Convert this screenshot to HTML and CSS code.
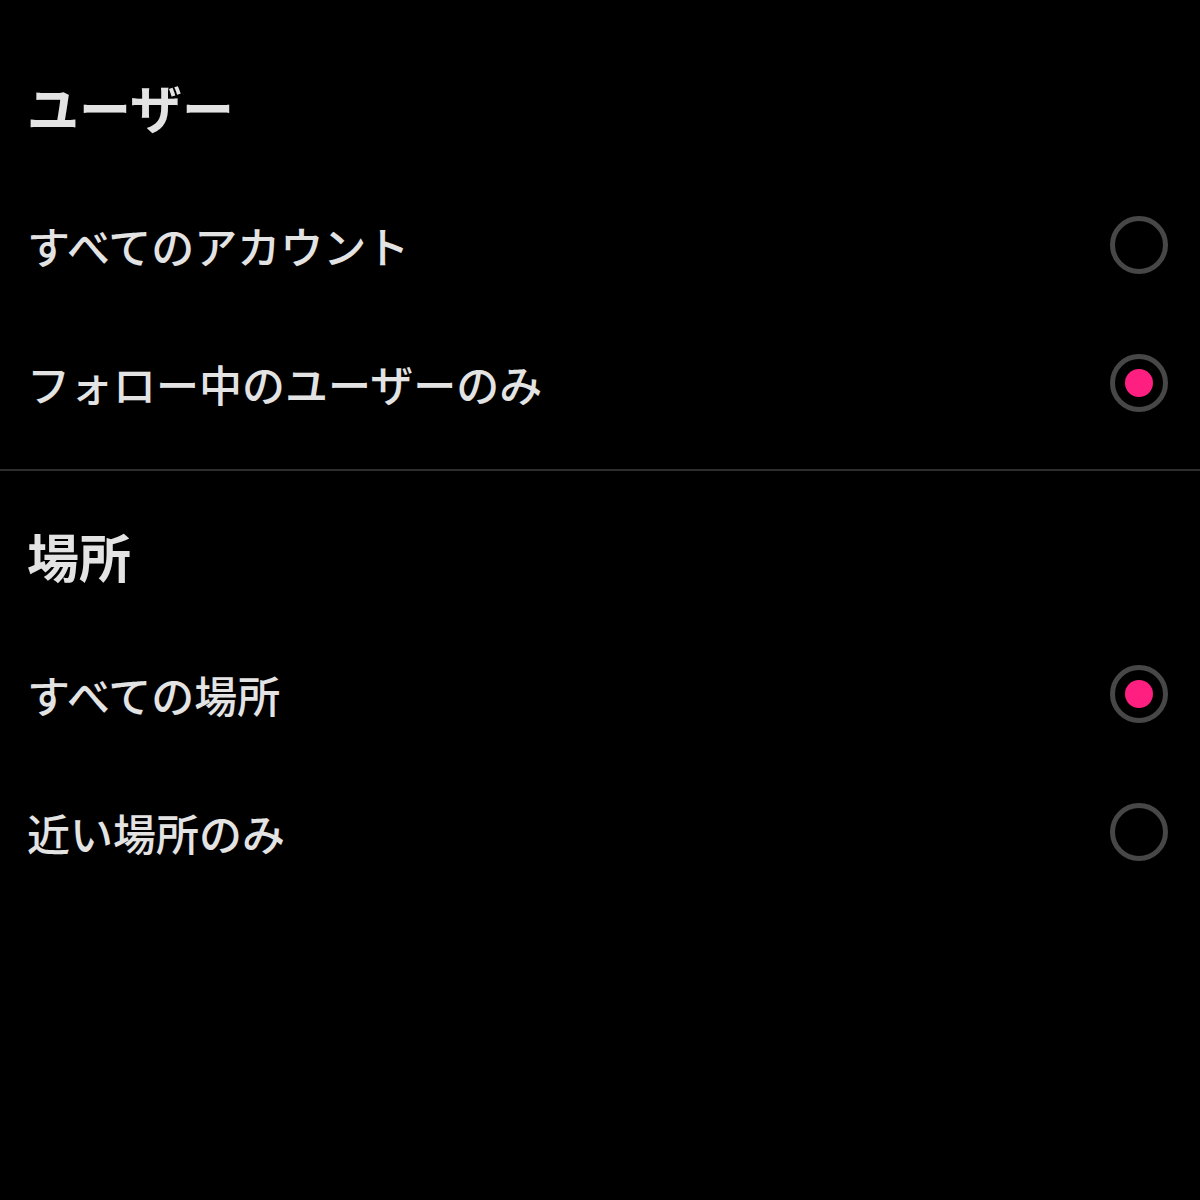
FILE: index.html
```html
<!DOCTYPE html>
<html lang="ja">
<head>
  <meta charset="UTF-8" />
  <meta name="viewport" content="width=device-width, initial-scale=1.0"/>
  <title>フィルター</title>
  <link rel="stylesheet" href="styles.css">
</head>
<body>
  <div class="page">
    <section class="group">
      <h2>ユーザー</h2>
      <label class="option">
        <span class="option-text">すべてのアカウント</span>
        <input type="radio" name="users" value="all">
        <span class="radio"></span>
      </label>
      <label class="option">
        <span class="option-text">フォロー中のユーザーのみ</span>
        <input type="radio" name="users" value="following" checked>
        <span class="radio"></span>
      </label>
    </section>

    <section class="group">
      <h2>場所</h2>
      <label class="option">
        <span class="option-text">すべての場所</span>
        <input type="radio" name="place" value="all" checked>
        <span class="radio"></span>
      </label>
      <label class="option">
        <span class="option-text">近い場所のみ</span>
        <input type="radio" name="place" value="near">
        <span class="radio"></span>
      </label>
    </section>
  </div>
</body>
</html>
```

FILE: styles.css
```css
body {
  margin: 0;
  background-color: #000;
  color: #e3e3e3;
  font-family: 'Noto Sans CJK JP', 'Noto Sans', sans-serif;
}

.page {
  padding-top: 20px;
}

.group {
  padding: 52px 32px 17px 27px;
}

.group + .group {
  border-top: 2px solid #2e2e2e;
  padding-top: 50px;
}

h2 {
  margin: 0 0 34px;
  font-size: 52px;
  font-weight: 700;
  line-height: 70px;
}

.option {
  display: flex;
  align-items: center;
  justify-content: space-between;
  height: 138px;
  cursor: pointer;
}

.option-text {
  font-size: 43px;
  font-weight: 500;
}

.option input {
  display: none;
}

.radio {
  width: 48px;
  height: 48px;
  border: 5px solid #474747;
  border-radius: 50%;
  display: flex;
  align-items: center;
  justify-content: center;
}

.option input:checked + .radio::after {
  content: "";
  width: 28px;
  height: 28px;
  border-radius: 50%;
  background-color: #ff1f80;
}
```
